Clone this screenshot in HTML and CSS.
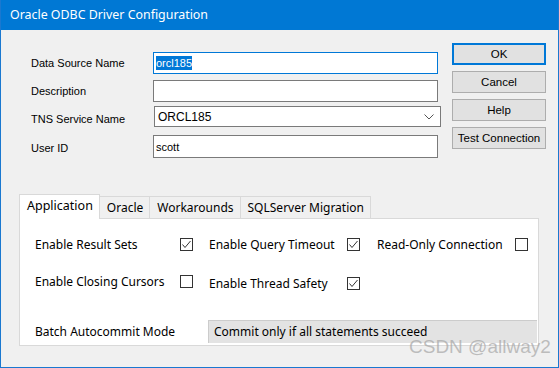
FILE: index.html
```html
<!DOCTYPE html>
<html lang="en">
  <head>
    <meta charset="UTF-8" />
    <title>Oracle ODBC Driver Configuration</title>
    <link rel="stylesheet" href="styles.css">
  </head>
  <body>
    <div class="window">
      <div class="titlebar">Oracle ODBC Driver Configuration</div>
      <div class="content">
        <div class="top">
          <div class="form">
            <div class="row r1">
              <span class="label">Data Source Name</span>
              <div class="field focus"><span class="selected">orcl185</span></div>
            </div>
            <div class="row r2">
              <span class="label">Description</span>
              <div class="field"></div>
            </div>
            <div class="row r3">
              <span class="label">TNS Service Name</span>
              <div class="field combo">
                <span>ORCL185</span>
                <svg class="chevron" width="10" height="6" viewBox="0 0 10 6">
                  <polyline points="0.5,0.5 5,5 9.5,0.5" fill="none" stroke="#555" stroke-width="1" />
                </svg>
              </div>
            </div>
            <div class="row r4">
              <span class="label">User ID</span>
              <div class="field">scott</div>
            </div>
          </div>
          <div class="buttons">
            <div class="btn default">OK</div>
            <div class="btn">Cancel</div>
            <div class="btn">Help</div>
            <div class="btn">Test Connection</div>
          </div>
        </div>

        <div class="tabs">
          <div class="tabbar">
            <div class="tab active">Application</div>
            <div class="tab">Oracle</div>
            <div class="tab">Workarounds</div>
            <div class="tab">SQLServer Migration</div>
          </div>
          <div class="panel">
            <div class="checks">
              <span>Enable Result Sets</span>
              <span class="box checked"><svg width="11" height="11" viewBox="0 0 11 11"><polyline points="1.5,5.5 4,8.5 9.5,2" fill="none" stroke="#333" stroke-width="1" /></svg></span>
              <span class="gap"></span>
              <span>Enable Query Timeout</span>
              <span class="box checked"><svg width="11" height="11" viewBox="0 0 11 11"><polyline points="1.5,5.5 4,8.5 9.5,2" fill="none" stroke="#333" stroke-width="1" /></svg></span>
              <span class="gap"></span>
              <span>Read-Only Connection</span>
              <span class="box"></span>

              <span>Enable Closing Cursors</span>
              <span class="box"></span>
              <span class="gap"></span>
              <span class="low">Enable Thread Safety</span>
              <span class="box checked low"><svg width="11" height="11" viewBox="0 0 11 11"><polyline points="1.5,5.5 4,8.5 9.5,2" fill="none" stroke="#333" stroke-width="1" /></svg></span>
            </div>
            <div class="batch">
              <span class="batch-label">Batch Autocommit Mode</span>
              <div class="disabled-combo">Commit only if all statements succeed</div>
            </div>
          </div>
        </div>

        <div class="watermark">CSDN @allway2</div>
      </div>
    </div>
  </body>
</html>
```

FILE: styles.css
```css
* {
  box-sizing: border-box;
}
body {
  margin: 0;
  background: #f0f0f0;
}
.window {
  position: relative;
  width: 559px;
  height: 368px;
  border: 1px solid #1a78d0;
  border-top: none;
  background: #f0f0f0;
  overflow: hidden;
}
.titlebar {
  height: 30px;
  margin: 0 -1px;
  padding-left: 10px;
  background: #0078d4;
  color: #fff;
  font-family: "Noto Sans", sans-serif;
  font-size: 12.4px;
  line-height: 29px;
}
.content {
  font-family: "Liberation Sans", Arial, sans-serif;
  font-size: 11px;
  color: #000;
}
.top {
  display: flex;
  padding: 13px 0 0 30px;
}
.form {
  width: 411px;
  padding-top: 9px;
}
.row {
  display: flex;
  align-items: center;
}
.label {
  width: 122px;
}
.field {
  width: 285px;
  height: 22px;
  border: 1px solid #7a7a7a;
  background: #fff;
  padding: 0 2px;
  display: flex;
  align-items: center;
}
.field.focus {
  border-color: #0078d7;
}
.selected {
  background: #0078d7;
  color: #fff;
  padding: 1px 0;
  line-height: 12px;
}
.r2 {
  margin-top: 6px;
}
.r3 {
  margin-top: 4px;
}
.r3 .label {
  padding-top: 5px;
}
.combo {
  width: 287px;
  height: 21px;
  margin-left: 1px;
  padding-left: 3px;
  justify-content: space-between;
  font-size: 12px;
}
.chevron {
  margin-right: 4px;
  margin-top: 1px;
}
.r4 {
  margin-top: 8px;
}
.r4 .field {
  height: 23px;
}
.r4 .label {
  padding-top: 3px;
}
.buttons {
  margin-left: 10px;
  display: flex;
  flex-direction: column;
  gap: 6px;
}
.btn {
  width: 94px;
  height: 22px;
  border: 1px solid #adadad;
  background: #e1e1e1;
  text-align: center;
  line-height: 20px;
  font-size: 11.5px;
}
.btn.default {
  border: 2px solid #0078d7;
  line-height: 18px;
}

.tabs {
  margin: 36px 0 0 18px;
  width: 520px;
  font-family: "Noto Sans", sans-serif;
  font-size: 12px;
}
.tabbar {
  display: flex;
  align-items: flex-end;
  height: 24px;
}
.tab {
  height: 22px;
  border: 1px solid #d9d9d9;
  border-bottom: none;
  border-left: none;
  padding: 0 6px 0 7px;
  line-height: 21px;
  background: #f0f0f0;
}
.tab.active {
  height: 25px;
  margin-bottom: -1px;
  border-left: 1px solid #d9d9d9;
  background: #fff;
  padding: 0 6px 0 7px;
  line-height: 22px;
  position: relative;
  font-size: 12.5px;
}
.panel {
  height: 128px;
  border: 1px solid #d9d9d9;
  background: #fff;
  padding: 17px 0 0 15px;
}
.checks {
  display: grid;
  grid-template-columns: 145px 13px 16px 138px 13px 17px 138px 13px;
  grid-auto-rows: 16px;
  row-gap: 21px;
  align-items: center;
}
.box {
  width: 13px;
  height: 13px;
  border: 1px solid #333;
  background: #fff;
  display: flex;
}
.low {
  position: relative;
  top: 2px;
}
.batch {
  display: flex;
  align-items: center;
  margin-top: 31px;
}
.batch-label {
  width: 173px;
}
.disabled-combo {
  width: 329px;
  height: 23px;
  background: #e3e3e3;
  border: 1px solid #cccccc;
  border-bottom: none;
  border-right: none;
  padding-left: 5px;
  line-height: 22px;
}
.watermark {
  position: absolute;
  left: 408px;
  top: 336px;
  font-family: "Liberation Sans", Arial, sans-serif;
  font-size: 19px;
  color: rgba(165, 165, 165, 0.7);
}
```
